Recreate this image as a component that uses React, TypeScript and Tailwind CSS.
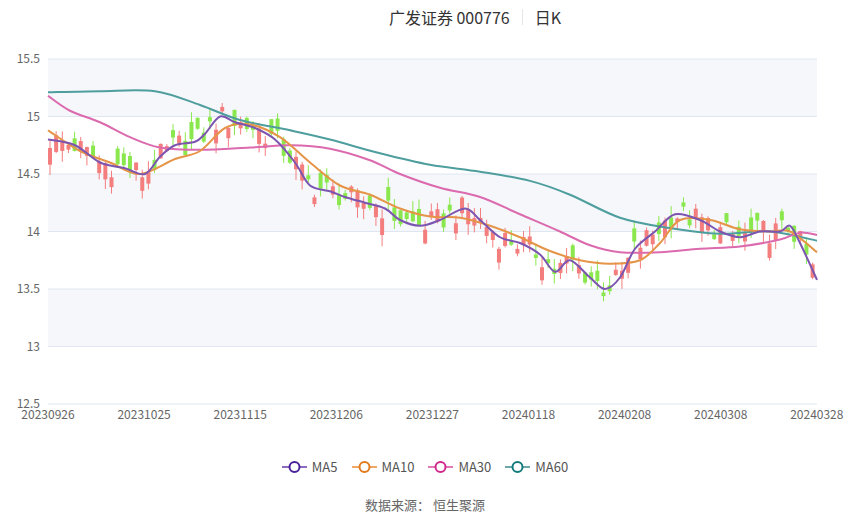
const L = 48;
const R = 817;
const T = 59;
const py = (p: number) => T + (15.5 - p) * 115;

type Pt = [number, number];

const ma5: Pt[] = [[48,14.8],[75,14.75],[100,14.6],[125,14.55],[145,14.5],[160,14.65],[175,14.75],[195,14.78],[205,14.85],[220,15.0],[235,14.95],[255,14.9],[275,14.8],[295,14.6],[310,14.4],[330,14.35],[345,14.3],[365,14.25],[385,14.2],[400,14.1],[420,14.05],[440,14.1],[465,14.2],[480,14.1],[500,13.95],[520,13.9],[540,13.8],[555,13.65],[570,13.75],[590,13.6],[605,13.5],[620,13.6],[635,13.85],[655,14.0],[675,14.15],[700,14.1],[720,14.0],[740,13.95],[760,14.0],[780,14.0],[790,14.05],[800,13.9],[817,13.58]];
const ma10: Pt[] = [[48,14.88],[80,14.7],[110,14.6],[140,14.5],[175,14.63],[200,14.7],[225,14.9],[250,14.93],[280,14.82],[310,14.6],[340,14.4],[370,14.32],[400,14.2],[430,14.13],[460,14.12],[490,14.05],[520,13.95],[550,13.83],[580,13.75],[610,13.72],[640,13.75],[660,13.9],[680,14.1],[710,14.1],[740,14.02],[770,14.0],[790,14.0],[817,13.82]];
const ma30: Pt[] = [[48,15.18],[70,15.05],[100,14.95],[130,14.82],[160,14.73],[200,14.71],[250,14.73],[290,14.75],[330,14.72],[370,14.62],[400,14.5],[440,14.38],[480,14.3],[520,14.15],[560,14.0],[590,13.88],[620,13.82],[660,13.82],[700,13.85],[740,13.87],[780,13.93],[800,13.99],[817,13.97]];
const ma60: Pt[] = [[48,15.21],[100,15.22],[155,15.22],[200,15.1],[240,14.97],[290,14.88],[330,14.8],[380,14.68],[430,14.58],[480,14.52],[530,14.44],[570,14.32],[620,14.12],[670,14.03],[720,13.98],[770,14.0],[817,13.92]];

function smooth(pts: Pt[]) {
  const p = pts.map(([x, v]) => [x, py(v)]);
  let d = `M${p[0][0]},${p[0][1]}`;
  for (let i = 0; i < p.length - 1; i++) {
    const a = p[i - 1] ?? p[i];
    const b = p[i];
    const c = p[i + 1];
    const e = p[i + 2] ?? c;
    d += ` C${b[0] + (c[0] - a[0]) / 6},${b[1] + (c[1] - a[1]) / 6} ${c[0] - (e[0] - b[0]) / 6},${c[1] - (e[1] - b[1]) / 6} ${c[0]},${c[1]}`;
  }
  return d;
}

function interp(pts: Pt[], x: number) {
  for (let i = 0; i < pts.length - 1; i++) {
    if (x <= pts[i + 1][0]) {
      const t = (x - pts[i][0]) / (pts[i + 1][0] - pts[i][0]);
      return pts[i][1] + t * (pts[i + 1][1] - pts[i][1]);
    }
  }
  return pts[pts.length - 1][1];
}

const rnd = (i: number) => {
  const s = Math.sin(i * 12.9898 + 78.233) * 43758.5453;
  return s - Math.floor(s);
};

const candles = Array.from({ length: 125 }, (_, i) => {
  const x = 50 + i * 6.15;
  const c = interp(ma5, x) + (rnd(i) - 0.5) * 0.22;
  const up = rnd(i + 300) > 0.5;
  const body = 0.03 + rnd(i + 700) * 0.12;
  const open = up ? c - body : c + body;
  const hi = Math.max(open, c) + rnd(i + 900) * 0.1;
  const lo = Math.min(open, c) - rnd(i + 1100) * 0.1;
  return { x, open, close: c, hi, lo, up };
});

const xLabels = ["20230926", "20231025", "20231115", "20231206", "20231227", "20240118", "20240208", "20240308", "20240328"];
const yLabels = [15.5, 15, 14.5, 14, 13.5, 13, 12.5];

const legend = [
  { name: "MA5", line: "#8e6cc0", ring: "#4a1f9a" },
  { name: "MA10", line: "#f0a868", ring: "#e07a1c" },
  { name: "MA30", line: "#e37ab8", ring: "#d0288a" },
  { name: "MA60", line: "#6aa9a9", ring: "#137a7a" },
];

export default function App() {
  return (
    <div className="h-[517px] w-[850px] overflow-hidden bg-white" style={{ fontFamily: '"Noto Sans CJK SC", "Noto Sans", sans-serif' }}>
      <div className="flex h-[34px] items-center justify-center gap-3 pl-[100px] text-[16px] text-[#333]">
        <span>广发证券 000776</span>
        <span className="h-[16px] w-px bg-[#e5e5e5]" />
        <span>日K</span>
      </div>
      <svg width="850" height="416" className="block" viewBox="0 34 850 416">
        {yLabels.slice(0, 6).map((v, i) => (
          <rect key={v} x={L} y={py(v)} width={R - L} height={57.5} fill={i % 2 === 0 ? "#f5f7fb" : "#ffffff"} />
        ))}
        {yLabels.map((v) => (
          <g key={v}>
            <line x1={L} x2={R} y1={py(v)} y2={py(v)} stroke="#e0e6f1" />
            <text x={40} y={py(v) + 4} textAnchor="end" fontSize="12" fill="#666">{v}</text>
          </g>
        ))}
        {xLabels.map((l, i) => (
          <text key={l} x={L + i * 96.1} y={419} textAnchor="middle" fontSize="12" fill="#666">{l}</text>
        ))}
        {candles.map((c, i) => (
          <g key={i} stroke={c.up ? "#f47e7e" : "#8ae84e"} fill={c.up ? "#f47e7e" : "#8ae84e"}>
            <line x1={c.x} x2={c.x} y1={py(c.hi)} y2={py(c.lo)} />
            <rect x={c.x - 2} width={4} y={py(Math.max(c.open, c.close))} height={Math.max(1, Math.abs(c.open - c.close) * 115)} stroke="none" />
          </g>
        ))}
        <path d={smooth(ma60)} fill="none" stroke="#4f9e9e" strokeWidth="2" />
        <path d={smooth(ma30)} fill="none" stroke="#db6aae" strokeWidth="2" />
        <path d={smooth(ma10)} fill="none" stroke="#e59448" strokeWidth="2" />
        <path d={smooth(ma5)} fill="none" stroke="#7c55b0" strokeWidth="2" />
      </svg>
      <div className="flex h-[34px] items-center justify-center gap-[14px] text-[13px] text-[#555]">
        {legend.map((l) => (
          <div key={l.name} className="flex items-center gap-[5px]">
            <svg width="25" height="14">
              <line x1="0" x2="25" y1="7" y2="7" stroke={l.line} strokeWidth="2" />
              <circle cx="12.5" cy="7" r="5" fill="white" stroke={l.ring} strokeWidth="2" />
            </svg>
            <span>{l.name}</span>
          </div>
        ))}
      </div>
      <div className="pt-[11px] text-center text-[13px] text-[#666]">数据来源：&nbsp;恒生聚源</div>
    </div>
  );
}
